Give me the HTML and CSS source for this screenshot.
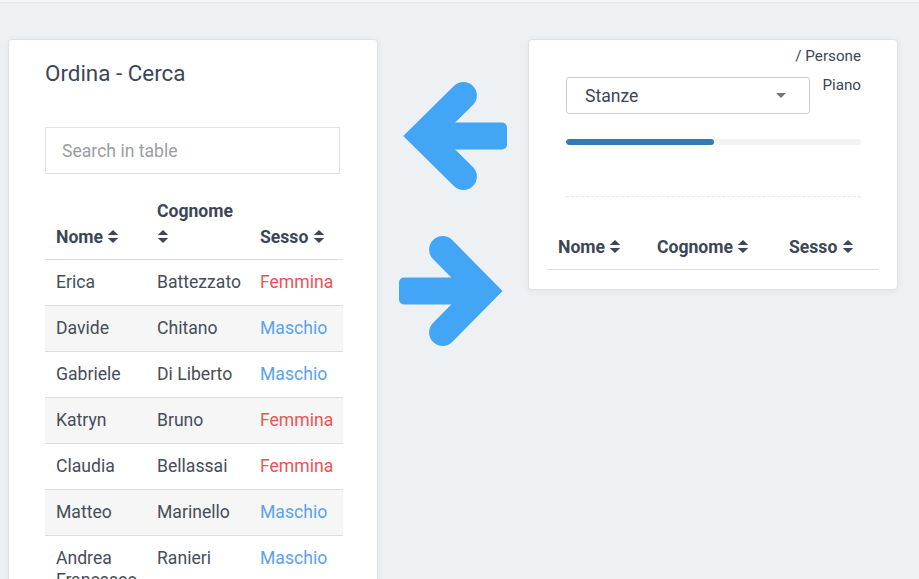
FILE: index.html
```html
<!DOCTYPE html>
<html lang="it">
<head>
<meta charset="utf-8">
<title>Ordina - Cerca</title>
<link rel="stylesheet" href="styles.css">
</head>
<body>
<div class="topbar"></div>
<main class="stage">
  <section class="card card-left">
    <h2 class="card-title">Ordina - Cerca</h2>
    <input class="search" type="text" placeholder="Search in table">
    <table class="grid grid-left">
      <colgroup><col class="c1"><col class="c2"><col class="c3"></colgroup>
      <thead>
        <tr>
          <th>Nome <svg class="sort" viewBox="0 0 12 16"><path d="M6 1 L11.5 6.5 H0.5 Z M0.5 9.5 H11.5 L6 15 Z"/></svg></th>
          <th>Cognome <svg class="sort" viewBox="0 0 12 16"><path d="M6 1 L11.5 6.5 H0.5 Z M0.5 9.5 H11.5 L6 15 Z"/></svg></th>
          <th>Sesso <svg class="sort" viewBox="0 0 12 16"><path d="M6 1 L11.5 6.5 H0.5 Z M0.5 9.5 H11.5 L6 15 Z"/></svg></th>
        </tr>
      </thead>
      <tbody>
        <tr><td>Erica</td><td>Battezzato</td><td class="f">Femmina</td></tr>
        <tr><td>Davide</td><td>Chitano</td><td class="m">Maschio</td></tr>
        <tr><td>Gabriele</td><td>Di Liberto</td><td class="m">Maschio</td></tr>
        <tr><td>Katryn</td><td>Bruno</td><td class="f">Femmina</td></tr>
        <tr><td>Claudia</td><td>Bellassai</td><td class="f">Femmina</td></tr>
        <tr><td>Matteo</td><td>Marinello</td><td class="m">Maschio</td></tr>
        <tr><td>Andrea Francesco</td><td>Ranieri</td><td class="m">Maschio</td></tr>
      </tbody>
    </table>
  </section>

  <div class="arrows">
    <svg class="arrow arrow-left" viewBox="0 0 112 115" width="112" height="115">
      <rect x="23" y="43.5" width="85" height="27" rx="5"/>
      <polyline points="64.4,16.5 23.4,57 64.4,97.5"/>
    </svg>
    <svg class="arrow arrow-right" viewBox="0 0 112 115" width="112" height="115">
      <rect x="0" y="43.5" width="85" height="27" rx="5"/>
      <polyline points="43.6,15.5 84.6,57 43.6,98.5"/>
    </svg>
  </div>

  <section class="card card-right">
    <div class="crumb">/ Persone</div>
    <div class="select-row">
      <div class="select">
        <span>Stanze</span>
        <span class="caret"></span>
      </div>
      <div class="floor">Piano</div>
    </div>
    <div class="progress"><div class="progress-bar" style="width: 50%"></div></div>
    <div class="divider"></div>
    <table class="grid grid-right">
      <colgroup><col class="r1"><col class="r2"><col class="r3"></colgroup>
      <thead>
        <tr>
          <th>Nome <svg class="sort" viewBox="0 0 12 16"><path d="M6 1 L11.5 6.5 H0.5 Z M0.5 9.5 H11.5 L6 15 Z"/></svg></th>
          <th>Cognome <svg class="sort" viewBox="0 0 12 16"><path d="M6 1 L11.5 6.5 H0.5 Z M0.5 9.5 H11.5 L6 15 Z"/></svg></th>
          <th>Sesso <svg class="sort" viewBox="0 0 12 16"><path d="M6 1 L11.5 6.5 H0.5 Z M0.5 9.5 H11.5 L6 15 Z"/></svg></th>
        </tr>
      </thead>
    </table>
  </section>
</main>
</body>
</html>
```

FILE: styles.css
```css
* { box-sizing: border-box; }

html, body {
  margin: 0;
  padding: 0;
  height: 579px;
  overflow: hidden;
}

body {
  background: #eef1f3;
  font-family: Roboto, "Liberation Sans", Arial, sans-serif;
  color: #3c4657;
}

.topbar {
  height: 3px;
  background: #f4f6f7;
  border-bottom: 1px solid #e4e8eb;
}

.stage {
  display: flex;
  align-items: flex-start;
  padding: 36px 21px 0 8px;
}

.card {
  background: #fff;
  border: 1px solid #dde2e6;
  border-radius: 4px;
  box-shadow: 0 1px 6px rgba(60, 70, 80, 0.07);
}

.card-left {
  width: 370px;
  flex: none;
  padding: 20px 35px 40px 36px;
}

.card-title {
  margin: 0;
  font-size: 22.4px;
  line-height: 27px;
  font-weight: 400;
  color: #3c4657;
}

.search {
  display: block;
  width: 295px;
  height: 47px;
  margin-top: 40px;
  padding: 0 16px;
  border: 1px solid #dde3e6;
  border-radius: 0;
  font-family: inherit;
  font-size: 17.6px;
  color: #444c58;
  outline: none;
}
.search::placeholder { color: #9a9da1; }

.grid {
  border-collapse: collapse;
  table-layout: fixed;
  font-size: 17.6px;
}

.grid th {
  text-align: left;
  vertical-align: bottom;
  font-weight: 700;
  line-height: 26px;
  padding: 12px 11px 9px;
  color: #3c4657;
  border-bottom: 1px solid #dcdfe2;
}

.grid td {
  line-height: 22px;
  padding: 11px 11px 12px;
  color: #454d59;
  border-top: 1px solid #dcdfe2;
  vertical-align: top;
}

.grid-left {
  width: 298px;
  margin-top: 12px;
}
.grid-left .c1 { width: 101px; }
.grid-left .c2 { width: 103px; }
.grid-left .c3 { width: 94px; }

.grid-left tbody tr:nth-child(even) td { background: #f6f6f6; }

.grid td.f { color: #f05252; }
.grid td.m { color: #5aa2ef; }

.sort {
  width: 12px;
  height: 15px;
  vertical-align: -1px;
  fill: #3c4657;
}

.arrows {
  width: 150px;
  flex: none;
  display: flex;
  flex-direction: column;
  align-items: flex-start;
  padding-left: 21px;
}

.arrow {
  display: block;
  fill: #42a5f5;
  stroke: #42a5f5;
}
.arrow rect { stroke: none; }
.arrow polyline {
  fill: none;
  stroke-width: 27;
  stroke-linecap: round;
  stroke-linejoin: miter;
}
.arrow-left { margin-top: 40px; }
.arrow-right { margin-top: 40px; }

.card-right {
  width: 370px;
  flex: none;
  padding: 7px 36px 19px 37px;
}

.crumb {
  text-align: right;
  font-size: 15.2px;
  line-height: 18px;
  color: #3c4657;
}

.select-row {
  display: flex;
  justify-content: space-between;
  align-items: flex-start;
  margin-top: 12px;
}

.select {
  width: 244px;
  height: 37px;
  border: 1px solid #c9cccf;
  border-radius: 3px;
  display: flex;
  align-items: center;
  justify-content: space-between;
  padding: 0 23px 0 18px;
  font-size: 17.6px;
  color: #3c4657;
}

.caret {
  width: 0;
  height: 0;
  border-left: 5px solid transparent;
  border-right: 5px solid transparent;
  border-top: 5px solid #777;
}

.floor {
  font-size: 15.2px;
  line-height: 18px;
  margin-top: -1px;
  color: #3c4657;
}

.progress {
  margin-top: 25px;
  height: 6px;
  border-radius: 3px;
  background: #f3f3f3;
  overflow: hidden;
}
.progress-bar {
  height: 100%;
  background: #337ab7;
  border-radius: 3px;
}

.divider {
  margin-top: 51px;
  border-top: 1px dashed #e6e7e8;
}

.grid-right {
  width: 332px;
  margin: 25px -19px 0;
}
.grid-right .r1 { width: 99px; }
.grid-right .r2 { width: 132px; }
.grid-right .r3 { width: 101px; }
```
